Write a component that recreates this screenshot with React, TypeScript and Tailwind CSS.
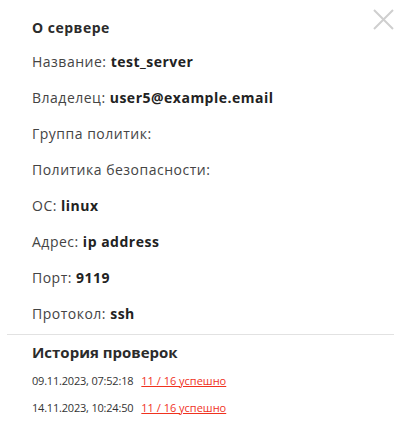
import React from "react";

const rows: [string, string][] = [
  ["Название:", "test_server"],
  ["Владелец:", "user5@example.email"],
  ["Группа политик:", ""],
  ["Политика безопасности:", ""],
  ["ОС:", "linux"],
  ["Адрес:", "ip address"],
  ["Порт:", "9119"],
  ["Протокол:", "ssh"],
];

export default function App() {
  return (
    <div className="relative w-[401px] h-[432px] bg-white text-[#2b2b2b]" style={{ fontFamily: '"Open Sans", sans-serif' }}>
      <button className="absolute right-[7px] top-[9px] w-[21px] h-[21px] text-[#cfcfcf]">
        <svg viewBox="0 0 21 21" width="21" height="21" stroke="currentColor" strokeWidth="2" fill="none">
          <path d="M1 1L20 20M20 1L1 20" />
        </svg>
      </button>
      <div className="px-[32px] pt-[18px] tracking-[0.5px]">
        <div className="text-[14px] font-bold leading-[20px]">О сервере</div>
        <div className="mt-[14px] flex flex-col gap-[16px]">
          {rows.map(([l, v]) => (
            <div key={l} className="text-[14px] leading-[20px]">
              <span className="text-[#444]">{l}</span>
              {v && <span className="font-bold text-[#222]"> {v}</span>}
            </div>
          ))}
        </div>
      </div>
      <div className="mx-[7px] mt-[10px] border-t border-[#e2e2e2]" />
      <div className="px-[32px] pt-[7px]">
        <div className="text-[15px] font-bold leading-[20px]">История проверок</div>
        <div className="mt-[9px] flex flex-col gap-[7px] text-[11px] leading-[20px]">
          {["09.11.2023, 07:52:18", "14.11.2023, 10:24:50"].map((d) => (
            <div key={d} className="flex gap-[8px]">
              <span className="text-[#333] tracking-[-0.2px]">{d}</span>
              <a className="text-[#f0321e] underline">11 / 16 успешно</a>
            </div>
          ))}
        </div>
      </div>
    </div>
  );
}
